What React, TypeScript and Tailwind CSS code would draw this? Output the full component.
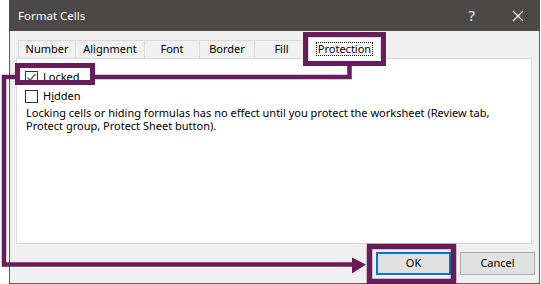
import React from "react";

const tabs = [
  { label: "Number", w: "w-[57px]" },
  { label: "Alignment", w: "w-[69px]" },
  { label: "Font", w: "w-[55px]" },
  { label: "Border", w: "w-[55px]" },
  { label: "Fill", w: "w-[54px]" },
];

function Check({ checked }: { checked?: boolean }) {
  return (
    <div className="w-[13px] h-[13px] border border-[#333333] bg-white flex items-center justify-center shrink-0">
      {checked && (
        <svg width="11" height="11" viewBox="0 0 11 11">
          <polyline points="1.5,5.5 4,8.2 9.5,2" fill="none" stroke="#555555" strokeWidth="1.3" />
        </svg>
      )}
    </div>
  );
}

export default function App() {
  const P = "#681c59";
  return (
    <div
      className="relative w-[541px] h-[284px] bg-white overflow-hidden text-[11px] text-black"
      style={{ fontFamily: '"Noto Sans", "Liberation Sans", sans-serif' }}
    >
      <div className="ml-[9px] w-[531px] h-[284px] flex flex-col">
        <div className="h-[31px] bg-[#4b4a48] flex items-center pl-[9px] text-white shrink-0">
          <span className="text-[11.5px]">Format Cells</span>
          <span className="ml-auto text-[15px] leading-none mr-[37px] text-[#e8e8e8]">?</span>
          <svg width="12" height="12" viewBox="0 0 12 12" className="mr-[16px]">
            <path d="M1 1 L11 11 M11 1 L1 11" stroke="#ffffff" strokeWidth="1.1" />
          </svg>
        </div>
        <div className="flex-1 flex flex-col bg-[#f0f0f0] border-l border-r border-b border-[#5d5d5d]">
          <div className="flex items-end h-[21px] mt-[6px] ml-[8px]">
            {tabs.map((t) => (
              <div
                key={t.label}
                className={`${t.w} h-[18px] border-t border-l border-[#d9d9d9] flex items-center justify-center`}
              >
                {t.label}
              </div>
            ))}
            <div className="relative z-10 -mb-px w-[73px] h-[22px] bg-white border-t border-l border-r border-[#d9d9d9] flex items-center justify-center">
              <span className="px-[1px] border border-dotted border-black leading-[12px]">Protection</span>
            </div>
          </div>
          <div className="ml-[6px] w-[516px] h-[186px] bg-white border border-[#d9d9d9] pt-[8px] pl-[8px]">
            <div className="h-[20px] flex items-center gap-[5px]">
              <Check checked />
              <span>
                <span className="underline">L</span>ocked
              </span>
            </div>
            <div className="h-[19px] flex items-center gap-[5px]">
              <Check />
              <span>
                H<span className="underline">i</span>dden
              </span>
            </div>
            <p className="pl-[1px] leading-[13px] whitespace-nowrap">
              Locking cells or hiding formulas has no effect until you protect the worksheet (Review tab,
              <br />
              Protect group, Protect Sheet button).
            </p>
          </div>
          <div className="flex justify-end gap-[9px] pr-[4px] mt-[8px]">
            <button className="w-[75px] h-[23px] bg-[#e1e1e1] border-2 border-[#0078d7] flex items-center justify-center">
              OK
            </button>
            <button className="w-[75px] h-[23px] bg-[#e1e1e1] border border-[#adadad] flex items-center justify-center">
              Cancel
            </button>
          </div>
        </div>
      </div>
      <svg className="absolute inset-0 pointer-events-none" width="541" height="284" viewBox="0 0 541 284">
        <rect x="305.5" y="34.5" width="78" height="29" fill="none" stroke={P} strokeWidth="5" />
        <rect x="17.5" y="65.5" width="75" height="17" fill="none" stroke={P} strokeWidth="5" />
        <rect x="369.5" y="246.5" width="84" height="35" fill="none" stroke={P} strokeWidth="5.5" />
        <polyline points="349.5,66 349.5,77 95,77" fill="none" stroke={P} strokeWidth="4.5" />
        <polyline points="15,77 4,77 4,264.5 353,264.5" fill="none" stroke={P} strokeWidth="4.5" />
        <polygon points="352,257.5 366,264.5 352,273.5" fill={P} />
      </svg>
    </div>
  );
}
